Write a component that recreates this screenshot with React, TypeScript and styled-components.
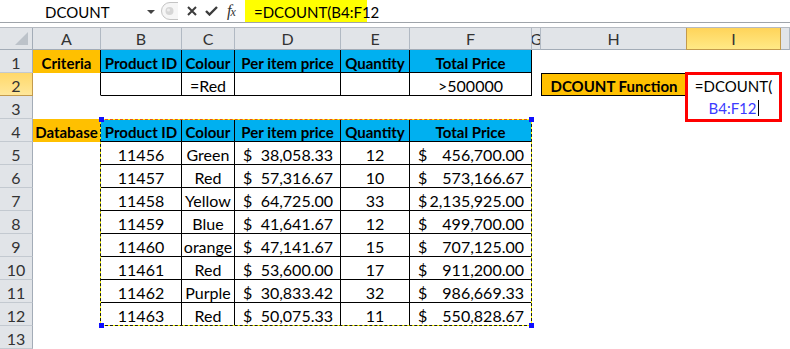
import { Fragment } from 'react';
import styled, { createGlobalStyle } from 'styled-components';

const GlobalStyle = createGlobalStyle`
  html, body {
    margin: 0;
    padding: 0;
    background: #fff;
  }
  body {
    font-family: Lato, 'Liberation Sans', sans-serif;
  }
`;

const ORANGE = '#ffc000';
const BLUE = '#00b0f0';

const Page = styled.div`
  width: 790px;
  height: 349px;
  overflow: hidden;
  background: #fff;
`;

const FormulaBar = styled.div`
  display: flex;
  height: 22px;
  border-bottom: 1px solid #9fa4aa;
  font-size: 15px;
  color: #000;
`;

const NameBox = styled.div`
  display: flex;
  align-items: flex-end;
  justify-content: space-between;
  width: 158px;
  box-sizing: border-box;
  padding: 0 3px 1px 45px;
`;

const DropArrow = styled.span`
  width: 0;
  height: 0;
  margin-bottom: 7px;
  border-left: 4px solid transparent;
  border-right: 4px solid transparent;
  border-top: 4px solid #444;
`;

const Controls = styled.div`
  display: flex;
  align-items: center;
  width: 86px;
  box-sizing: border-box;
  padding-left: 2px;
`;

const Icon = styled.svg<{ $gap: number }>`
  margin-left: ${(p) => p.$gap}px;
  flex-shrink: 0;
`;

const Fx = styled.span`
  margin-left: 9px;
  font-family: 'Liberation Serif', serif;
  font-style: italic;
  font-size: 16px;
  color: #333;
  letter-spacing: -1px;
`;

const FxSmall = styled.span`
  font-size: 12px;
`;

const FormulaInput = styled.div`
  flex: 1;
  display: flex;
  padding-left: 1px;
`;

const Highlight = styled.div`
  display: flex;
  align-items: flex-end;
  width: 122px;
  box-sizing: border-box;
  padding: 0 0 1px 9px;
  background: #ffff00;
  white-space: nowrap;
`;

const Splitter = styled.div`
  height: 4px;
  border-bottom: 1px solid #b5bac1;
`;

const Sheet = styled.div`
  position: relative;
  display: grid;
  grid-template-columns: 33px 68px 81px 53px 106px 69px 122px 9px 146px 94px 9px;
  grid-template-rows: 22px repeat(13, 23px);
  font-size: 16px;
  color: #000;
`;

const Corner = styled.div`
  position: relative;
  background: #e1e4e8;
  border-right: 1px solid #a3acb7;
  border-bottom: 1px solid #a3acb7;

  &::after {
    content: '';
    position: absolute;
    right: 4px;
    bottom: 4px;
    width: 13px;
    height: 13px;
    background: #bcc2c9;
    clip-path: polygon(100% 0, 100% 100%, 0 100%);
  }
`;

const ColHead = styled.div<{ $active?: boolean }>`
  display: flex;
  align-items: center;
  justify-content: center;
  overflow: hidden;
  box-sizing: border-box;
  color: #333;
  background: ${(p) => (p.$active ? 'linear-gradient(#ffd45a, #ffe986)' : '#e1e4e8')};
  border-right: 1px solid ${(p) => (p.$active ? '#c39a4c' : '#b1b9c3')};
  border-bottom: 1px solid ${(p) => (p.$active ? '#c39a4c' : '#a3acb7')};
  ${(p) => p.$active && 'border-left: 1px solid #c39a4c; margin-left: -1px;'}
`;

const RowHead = styled.div<{ $active?: boolean }>`
  display: flex;
  align-items: flex-end;
  justify-content: center;
  box-sizing: border-box;
  color: #333;
  background: ${(p) => (p.$active ? 'linear-gradient(#ffd86a, #ffe79a)' : '#e1e4e8')};
  border-right: 1px solid ${(p) => (p.$active ? '#c39a4c' : '#a3acb7')};
  border-bottom: 1px solid ${(p) => (p.$active ? '#c39a4c' : '#c3c9d0')};
`;

type Align = 'center' | 'between';

const Cell = styled.div<{
  $fill?: string;
  $bold?: boolean;
  $align?: Align;
  $r?: boolean;
  $b?: boolean;
  $box?: boolean;
}>`
  display: flex;
  align-items: flex-end;
  justify-content: ${(p) => (p.$align === 'between' ? 'space-between' : 'center')};
  box-sizing: border-box;
  overflow: hidden;
  white-space: nowrap;
  padding: ${(p) => (p.$align === 'between' ? '0 7px 0 8px' : '0')};
  background: ${(p) => p.$fill || '#fff'};
  font-weight: ${(p) => (p.$bold ? 700 : 400)};
  font-size: ${(p) => (p.$bold ? '15px' : '16px')};
  border-right: 1px solid ${(p) => (p.$r ? '#000' : 'transparent')};
  border-bottom: 1px solid ${(p) => (p.$b ? '#000' : 'transparent')};
  ${(p) => p.$box && 'border: 1px solid #000;'}
`;

const MarqueeBase = styled.div`
  position: absolute;
  left: 100px;
  top: 91px;
  width: 432px;
  height: 207px;
  box-sizing: border-box;
  border: 1px solid #ffff00;
  pointer-events: none;
`;

const MarqueeDash = styled(MarqueeBase)`
  border: 1px dashed #1a1a1a;
  border-top-color: #e8531c;
`;

const Handle = styled.div<{ $x: number; $y: number }>`
  position: absolute;
  left: ${(p) => p.$x}px;
  top: ${(p) => p.$y}px;
  width: 5px;
  height: 5px;
  background: #1010ff;
`;

const EditBox = styled.div`
  position: absolute;
  left: 685px;
  top: 44px;
  width: 97px;
  height: 50px;
  box-sizing: border-box;
  border: 3px solid #ff0000;
  background: #fff;
  display: flex;
  flex-direction: column;
  align-items: center;
  font-size: 15px;
`;

const EditLine = styled.div<{ $ref?: boolean }>`
  display: flex;
  align-items: center;
  height: 22px;
  line-height: 22px;
  color: ${(p) => (p.$ref ? '#3b3bff' : '#000')};
  white-space: nowrap;
`;

const Caret = styled.span`
  width: 1px;
  height: 16px;
  margin-left: 1px;
  background: #000;
`;

type Spec = {
  text?: string;
  money?: string;
  fill?: string;
  bold?: boolean;
  r?: boolean;
  b?: boolean;
  box?: boolean;
};

const columns = ['A', 'B', 'C', 'D', 'E', 'F', 'G', 'H', 'I', ''];
const heads = ['Product ID', 'Colour', 'Per item price', 'Quantity', 'Total Price'];

const headerRow = (label: string): Spec[] => [
  { text: label, fill: ORANGE, bold: true, r: true },
  ...heads.map((h) => ({ text: h, fill: BLUE, bold: true, r: true, b: true })),
];

const data = [
  ['11456', 'Green', '38,058.33', '12', '456,700.00'],
  ['11457', 'Red', '57,316.67', '10', '573,166.67'],
  ['11458', 'Yellow', '64,725.00', '33', '2,135,925.00'],
  ['11459', 'Blue', '41,641.67', '12', '499,700.00'],
  ['11460', 'orange', '47,141.67', '15', '707,125.00'],
  ['11461', 'Red', '53,600.00', '17', '911,200.00'],
  ['11462', 'Purple', '30,833.42', '32', '986,669.33'],
  ['11463', 'Red', '50,075.33', '11', '550,828.67'],
];

const rows: Spec[][] = [
  headerRow('Criteria'),
  [
    { r: true },
    { r: true, b: true },
    { text: '=Red', r: true, b: true },
    { r: true, b: true },
    { r: true, b: true },
    { text: '>500000', r: true, b: true },
    {},
    { text: 'DCOUNT Function', fill: ORANGE, bold: true, box: true },
  ],
  [],
  headerRow('Database'),
  ...data.map(([id, colour, price, qty, total]) => [
    { r: true },
    { text: id, r: true, b: true },
    { text: colour, r: true, b: true },
    { money: price, r: true, b: true },
    { text: qty, r: true, b: true },
    { money: total, r: true, b: true },
  ]),
  [],
];

const App = () => {
  return (
    <Page>
      <GlobalStyle />
      <FormulaBar>
        <NameBox>
          <span>DCOUNT</span>
          <DropArrow />
        </NameBox>
        <Controls>
          <Icon $gap={0} width="18" height="22" viewBox="0 0 18 22">
            <path d="M18 2.5 H10 A8.5 8.5 0 0 0 10 19.5 H18" fill="#f6f6f6" stroke="#c4c4c4" />
            <circle cx="9.5" cy="11" r="4" fill="#d6d6d6" />
            <circle cx="8.5" cy="10" r="1.6" fill="#ececec" />
          </Icon>
          <Icon $gap={9} width="10" height="10" viewBox="0 0 10 10">
            <path d="M1 1 L9 9 M9 1 L1 9" stroke="#3c3c3c" strokeWidth="2" />
          </Icon>
          <Icon $gap={8} width="13" height="10" viewBox="0 0 13 10">
            <path d="M1 5 L4.5 8.5 L12 1" stroke="#3c3c3c" strokeWidth="2.4" fill="none" />
          </Icon>
          <Fx>
            f<FxSmall>x</FxSmall>
          </Fx>
        </Controls>
        <FormulaInput>
          <Highlight>=DCOUNT(B4:F12</Highlight>
        </FormulaInput>
      </FormulaBar>
      <Splitter />

      <Sheet>
        <Corner />
        {columns.map((c, i) => (
          <ColHead key={i} $active={c === 'I'}>
            {c}
          </ColHead>
        ))}

        {rows.map((row, ri) => (
          <Fragment key={ri}>
            <RowHead $active={ri === 1}>{ri + 1}</RowHead>
            {columns.map((_, ci) => {
              const s = row[ci] || {};
              return (
                <Cell
                  key={ci}
                  $fill={s.fill}
                  $bold={s.bold}
                  $r={s.r}
                  $b={s.b}
                  $box={s.box}
                  $align={s.money ? 'between' : 'center'}
                >
                  {s.money ? (
                    <>
                      <span>$</span>
                      <span>{s.money}</span>
                    </>
                  ) : (
                    s.text
                  )}
                </Cell>
              );
            })}
          </Fragment>
        ))}

        <MarqueeBase />
        <MarqueeDash />
        <Handle $x={99} $y={89} />
        <Handle $x={529} $y={89} />
        <Handle $x={99} $y={295} />
        <Handle $x={529} $y={295} />

        <EditBox>
          <EditLine>=DCOUNT(</EditLine>
          <EditLine $ref>
            B4:F12
            <Caret />
          </EditLine>
        </EditBox>
      </Sheet>
    </Page>
  );
};

export default App;
